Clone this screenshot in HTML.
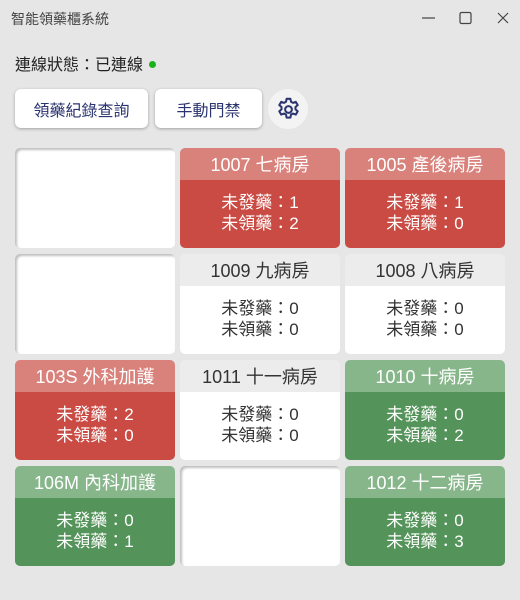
<!DOCTYPE html><html><head><meta charset="utf-8"><style>
body{margin:0;width:520px;height:600px;background:#e6e6e6;font-family:"Liberation Sans","Noto Sans CJK TC",sans-serif;position:relative;overflow:hidden;color:#333}
.t{position:absolute;left:11px;top:9px;font-size:14px;color:#444}
.st{position:absolute;left:15px;top:51px;font-size:16px;color:#222}
.dot{display:inline-block;width:7px;height:7px;border-radius:50%;background:#1ab21a;margin-left:6px;vertical-align:2px}
.btn{position:absolute;top:89px;height:39px;background:#fff;border-radius:6px;box-shadow:0 1px 3px rgba(0,0,0,.3);font-size:16px;color:#2b3470;display:flex;align-items:center;justify-content:center}
.gear{position:absolute;left:268px;top:89px;width:40px;height:40px;border-radius:50%;background:#f3f3f3;display:flex;align-items:center;justify-content:center}
.c{position:absolute;width:160px;height:100px;border-radius:5px;overflow:hidden;text-align:center}
.e{background:#fff;box-shadow:inset 2px 2px 2px rgba(0,0,0,.25)}
.h{height:32px;line-height:34px;font-size:18px}
.b{height:68px;font-size:17px;line-height:21px;padding-top:12px;box-sizing:border-box}
.r .h{background:#d9817b;color:#fff}.r .b{background:#c94b43;color:#fff}
.w .h{background:#ececec;color:#333}.w .b{background:#fff;color:#333}
.g .h{background:#86b68a;color:#fff}.g .b{background:#54945a;color:#fff}
</style></head><body>
<div class="t">智能領藥櫃系統</div>
<svg style="position:absolute;left:420px;top:10px" width="90" height="16"><path d="M2 8h13" stroke="#444" stroke-width="1.2"/><rect x="40" y="2.5" width="11" height="11" rx="1.5" fill="none" stroke="#444" stroke-width="1.2"/><path d="M78 3l10 10M88 3l-10 10" stroke="#444" stroke-width="1.2"/></svg>
<div class="st">連線狀態：已連線<span class="dot"></span></div>
<div class="btn" style="left:15px;width:133px">領藥紀錄查詢</div>
<div class="btn" style="left:155px;width:107px">手動門禁</div>
<div class="gear"><svg width="27" height="27" viewBox="0 0 24 24" fill="none" stroke="#2b3470" stroke-width="1.8" stroke-linejoin="round"><path d="M10.3 2.5h3.4l.5 2.6 1.8 1 2.5-.9 1.7 2.9-2 1.7v2.1l2 1.7-1.7 2.9-2.5-.9-1.8 1-.5 2.6h-3.4l-.5-2.6-1.8-1-2.5.9-1.7-2.9 2-1.7V9.8l-2-1.7 1.7-2.9 2.5.9 1.8-1z"/><circle cx="12" cy="12" r="3"/></svg></div>

<div class="c e" style="left:15px;top:148px"></div>
<div class="c r" style="left:180px;top:148px"><div class="h">1007 七病房</div><div class="b">未發藥：1<br>未領藥：2</div></div>
<div class="c r" style="left:345px;top:148px"><div class="h">1005 產後病房</div><div class="b">未發藥：1<br>未領藥：0</div></div>

<div class="c e" style="left:15px;top:254px"></div>
<div class="c w" style="left:180px;top:254px"><div class="h">1009 九病房</div><div class="b">未發藥：0<br>未領藥：0</div></div>
<div class="c w" style="left:345px;top:254px"><div class="h">1008 八病房</div><div class="b">未發藥：0<br>未領藥：0</div></div>

<div class="c r" style="left:15px;top:360px"><div class="h">103S 外科加護</div><div class="b">未發藥：2<br>未領藥：0</div></div>
<div class="c w" style="left:180px;top:360px"><div class="h">1011 十一病房</div><div class="b">未發藥：0<br>未領藥：0</div></div>
<div class="c g" style="left:345px;top:360px"><div class="h">1010 十病房</div><div class="b">未發藥：0<br>未領藥：2</div></div>

<div class="c g" style="left:15px;top:466px"><div class="h">106M 內科加護</div><div class="b">未發藥：0<br>未領藥：1</div></div>
<div class="c e" style="left:180px;top:466px"></div>
<div class="c g" style="left:345px;top:466px"><div class="h">1012 十二病房</div><div class="b">未發藥：0<br>未領藥：3</div></div>
</body></html>
